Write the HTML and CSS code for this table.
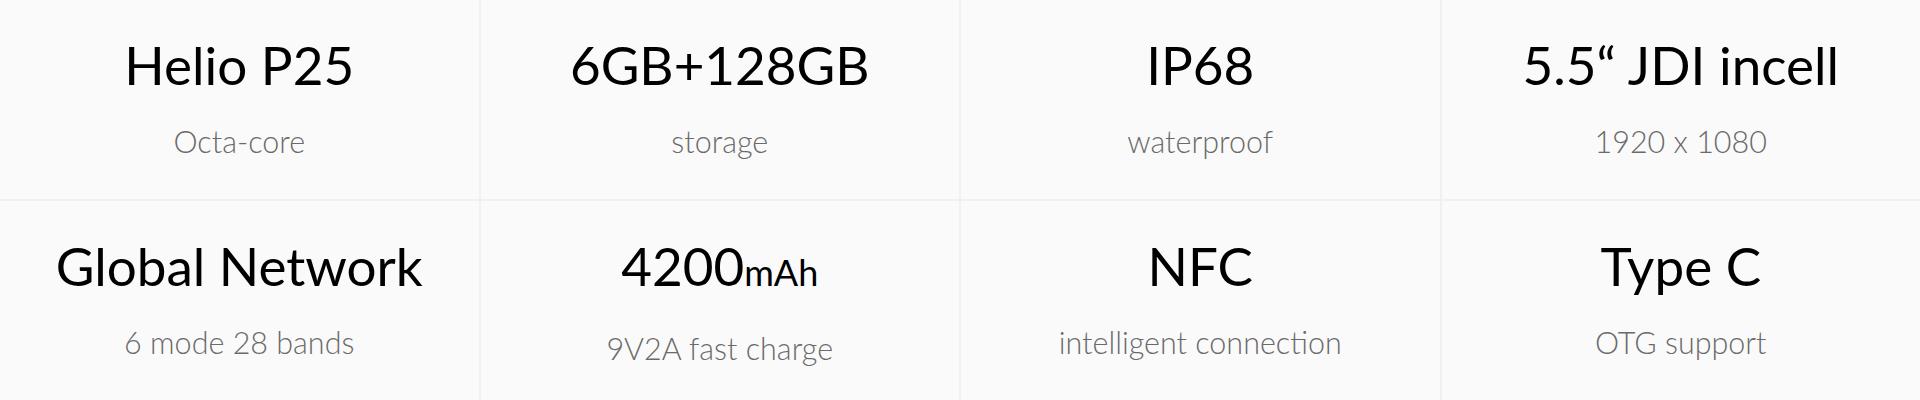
FILE: index.html
```html
<!DOCTYPE html>
<html>

<head>
	<title>Specs</title>
	<link rel="stylesheet" href="styles.css">
</head>

<body>
	<div class="specs">
		<div class="cell">
			<p class="big">Helio P25</p>
			<p class="small">Octa-core</p>
		</div>
		<div class="cell">
			<p class="big">6GB+128GB</p>
			<p class="small">storage</p>
		</div>
		<div class="cell">
			<p class="big">IP68</p>
			<p class="small">waterproof</p>
		</div>
		<div class="cell">
			<p class="big">5.5&#8220; JDI incell</p>
			<p class="small">1920 x 1080</p>
		</div>
		<div class="cell">
			<p class="big">Global Network</p>
			<p class="small">6 mode 28 bands</p>
		</div>
		<div class="cell">
			<p class="big">4200<span class="unit">mAh</span></p>
			<p class="small">9V2A fast charge</p>
		</div>
		<div class="cell">
			<p class="big">NFC</p>
			<p class="small">intelligent connection</p>
		</div>
		<div class="cell">
			<p class="big">Type C</p>
			<p class="small">OTG support</p>
		</div>
	</div>
</body>

</html>
```

FILE: styles.css
```css
body{
	margin: 0;
	background-color: #fafafa;
	font-family: Lato, "Open Sans", sans-serif;
}

.specs{
	display: grid;
	grid-template-columns: repeat(4, 1fr);
	grid-template-rows: 199px 199px;
	gap: 2px;
	background-color: #f0f0f0;
	height: 400px;
}

.cell{
	background-color: #fafafa;
	text-align: center;
	padding-top: 31px;
}

.big{
	margin: 0;
	font-size: 53px;
	line-height: 68px;
	color: #000;
}

.unit{
	font-size: 36px;
}

.small{
	margin: 0;
	margin-top: 22px;
	font-size: 30.5px;
	line-height: 40px;
	font-weight: 300;
	color: #6a6a6a;
}
```
